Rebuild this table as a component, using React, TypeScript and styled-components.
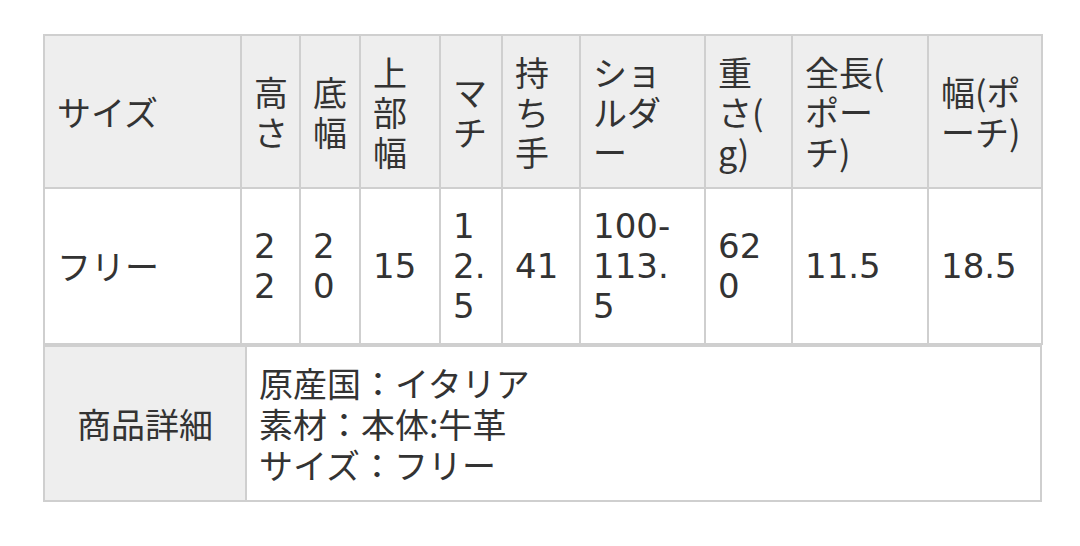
import styled, {createGlobalStyle} from "styled-components";

const GlobalStyle = createGlobalStyle`
    html, body {
        margin: 0;
        background: #fff;
    }
`

type Column = {
    lines: string[]
    width: number
}

// header lines follow the wrapping of the source page
const columns: Column[] = [
    {lines: ["サイズ"], width: 197},
    {lines: ["高", "さ"], width: 59},
    {lines: ["底", "幅"], width: 60},
    {lines: ["上", "部", "幅"], width: 80},
    {lines: ["マ", "チ"], width: 62},
    {lines: ["持", "ち", "手"], width: 78},
    {lines: ["ショ", "ルダ", "ー"], width: 125},
    {lines: ["重", "さ(", "g)"], width: 87},
    {lines: ["全長(", "ポー", "チ)"], width: 136},
    {lines: ["幅(ポ", "ーチ)"], width: 114},
]

const sizeRow = ["フリー", "22", "20", "15", "12.5", "41", "100-113.5", "620", "11.5", "18.5"]

const details = ["原産国：イタリア", "素材：本体:牛革", "サイズ：フリー"]

export default function App() {
    return (
        <Page>
            <GlobalStyle/>
            <SizeTable>
                <colgroup>
                    {columns.map((c, i) => <col key={i} style={{width: c.width}}/>)}
                </colgroup>
                <thead>
                <tr>
                    {columns.map((c, i) => (
                        <HeadCell key={i}>
                            {c.lines.map((l, j) => <HeadLine key={j}>{l}</HeadLine>)}
                        </HeadCell>
                    ))}
                </tr>
                </thead>
                <tbody>
                <tr>
                    {sizeRow.map((v, i) => (
                        <BodyCell key={i} $numeric={i > 0}>{v}</BodyCell>
                    ))}
                </tr>
                </tbody>
            </SizeTable>
            <DetailTable>
                <colgroup>
                    <col style={{width: 202}}/>
                    <col/>
                </colgroup>
                <tbody>
                <tr>
                    <DetailLabel>商品詳細</DetailLabel>
                    <DetailBody>
                        {details.map(line => <DetailLine key={line}>{line}</DetailLine>)}
                    </DetailBody>
                </tr>
                </tbody>
            </DetailTable>
        </Page>
    )
}

const Page = styled.div`
    padding: 34px 0 0 43px;
    width: 999px;
    font-family: "Noto Sans CJK JP", sans-serif;
    color: #333;
`

const SizeTable = styled.table`
    width: 999px;
    table-layout: fixed;
    border-collapse: collapse;
    border: 2px solid #cfcfcf;
`

const HeadCell = styled.th`
    background-color: #eeeeee;
    border: 2px solid #cfcfcf;
    padding: 16px 12px 15px 12px;
    text-align: left;
    vertical-align: middle;
    font-weight: 400;
    font-size: 34px;
    line-height: 40px;
`

const HeadLine = styled.span`
    display: block;
    white-space: nowrap;
`

const BodyCell = styled.td<{ $numeric?: boolean }>`
    background-color: #fff;
    border: 2px solid #cfcfcf;
    padding: 17px 18px 17px 12px;
    text-align: left;
    vertical-align: middle;
    font-family: ${p => p.$numeric ? `"DejaVu Sans", "Noto Sans CJK JP", sans-serif` : `"Noto Sans CJK JP", sans-serif`};
    font-size: 34px;
    line-height: 40px;
    word-break: break-all;
`

const DetailTable = styled.table`
    width: 999px;
    table-layout: fixed;
    border-collapse: collapse;
    border: 2px solid #cfcfcf;
`

const DetailLabel = styled.th`
    background-color: #eeeeee;
    border: 2px solid #cfcfcf;
    padding: 15px;
    text-align: center;
    vertical-align: middle;
    font-weight: 400;
    font-size: 34px;
    line-height: 40px;
`

const DetailBody = styled.td`
    border: 2px solid #cfcfcf;
    padding: 15px 12px;
    vertical-align: middle;
    font-size: 34px;
    line-height: 41px;
`

const DetailLine = styled.div`
    white-space: nowrap;
`
